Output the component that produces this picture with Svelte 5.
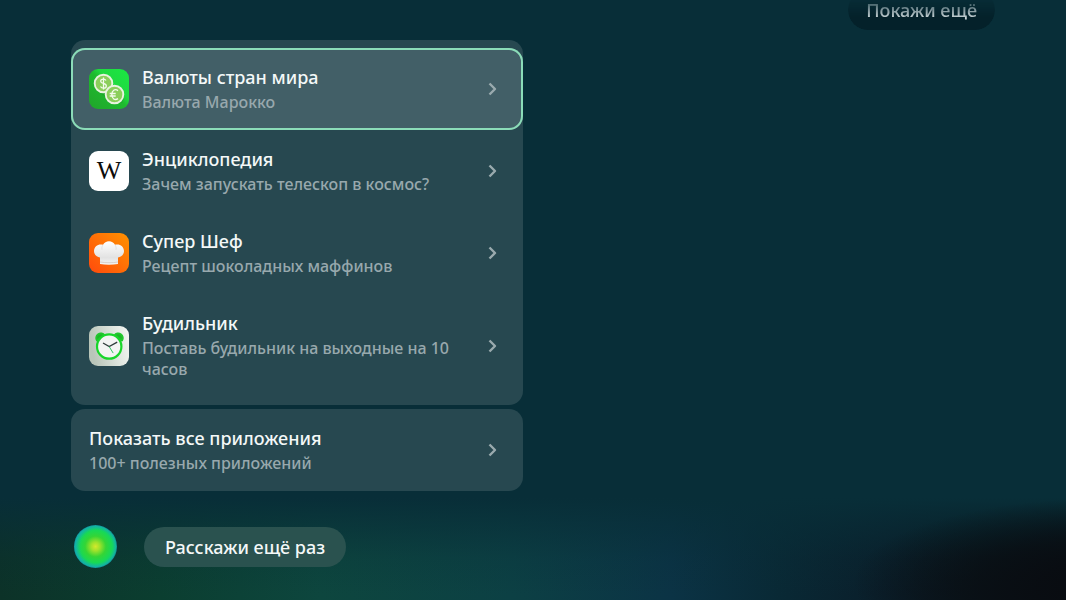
<script lang="ts">
  type App = {
    icon: string;
    title: string;
    phrase: string;
  };

  const apps: App[] = [
    { icon: 'currency', title: 'Валюты стран мира', phrase: 'Валюта Марокко' },
    { icon: 'wiki', title: 'Энциклопедия', phrase: 'Зачем запускать телескоп в космос?' },
    { icon: 'chef', title: 'Супер Шеф', phrase: 'Рецепт шоколадных маффинов' },
    { icon: 'alarm', title: 'Будильник', phrase: 'Поставь будильник на выходные на 10 часов' }
  ];

  let selected = $state(0);
</script>

{#snippet chevron()}
  <svg class="chevron" viewBox="0 0 12 16" aria-hidden="true">
    <path d="M2.500 2.500l5.500 5.500-5.500 5.500" fill="none" stroke="currentColor" stroke-width="2.400" stroke-linejoin="round" />
  </svg>
{/snippet}

<div class="screen">
  <main>
    <div class="history">
      <p class="message">Покажи ещё</p>
    </div>

    <div class="cards">
      <ul class="card list">
        {#each apps as app, i}
          <li>
            <button type="button" class="row" class:selected={selected === i} onclick={() => (selected = i)}>
              <svg class="icon" viewBox="0 0 40 40" aria-hidden="true">
                {#if app.icon === 'currency'}
                  <defs>
                    <linearGradient id="currency-bg" x1="0" y1="1" x2="1" y2="0">
                      <stop offset="0" stop-color="#20a52a" />
                      <stop offset="0.5" stop-color="#1fba2f" />
                      <stop offset="0.62" stop-color="#20da40" />
                      <stop offset="1" stop-color="#1ae743" />
                    </linearGradient>
                  </defs>
                  <rect width="40" height="40" rx="9" fill="url(#currency-bg)" />
                  <path d="M7 21l17 13h9l2-5-18-18z" fill="#138c20" opacity="0.25" />
                  <circle cx="14.5" cy="14.5" r="8.8" fill="#8bce5b" stroke="#e9f3df" stroke-width="1.9" />
                  <circle cx="25.5" cy="25.5" r="8.8" fill="#8bce5b" stroke="#e9f3df" stroke-width="1.9" />
                  <path d="M17 11.5c-.6-1-1.5-1.4-2.6-1.4-1.6 0-2.7.8-2.7 2.1 0 3 5.6 1.5 5.6 4.7 0 1.4-1.2 2.2-2.8 2.2-1.5 0-2.5-.6-3-1.6M14.5 8.5v12" fill="none" stroke="#f3faec" stroke-width="1.3" />
                  <path d="M29 21.6c-3.1-2.2-6.2-.1-6.2 4s3.1 6.2 6.2 4M20.7 24.5h6M20.7 27h6" fill="none" stroke="#f3faec" stroke-width="1.3" />
                {:else if app.icon === 'wiki'}
                  <rect width="40" height="40" rx="9" fill="#ffffff" />
                  <text x="20" y="28" text-anchor="middle" fill="#0b0b0b" font-family="Liberation Serif, serif" font-size="26">W</text>
                {:else if app.icon === 'chef'}
                  <defs>
                    <linearGradient id="chef-bg" x1="0" y1="1" x2="1" y2="0">
                      <stop offset="0" stop-color="#ff4a0c" />
                      <stop offset="1" stop-color="#ff9200" />
                    </linearGradient>
                    <linearGradient id="chef-hat" x1="0" y1="0" x2="0" y2="1">
                      <stop offset="0" stop-color="#ffffff" />
                      <stop offset="0.7" stop-color="#e2e2e2" />
                      <stop offset="1" stop-color="#f5f5f5" />
                    </linearGradient>
                  </defs>
                  <rect width="40" height="40" rx="9" fill="url(#chef-bg)" />
                  <path d="M11 24.5c-3.5-.5-6-3-6-6.500 0-4.800 4.500-7.600 9-6.300 1.300-2.300 3.400-3.500 6-3.500s4.700 1.200 6 3.500c4.500-1.300 9 1.500 9 6.300 0 3.500-2.500 6-6 6.500v6.500c-5.700 1-12.600 1-18 0z" fill="url(#chef-hat)" />
                  <path d="M14 11.700c-1 1.500-1.300 3-1 5M26 11.700c1 1.500 1.300 3 1 5" fill="none" stroke="#d9d9d9" stroke-width="0.7" />
                  <path d="M11 29c5.700 1 12.300 1 18 0" fill="none" stroke="#c9b8b0" stroke-width="0.6" />
                {:else}
                  <defs>
                    <linearGradient id="alarm-bg" x1="0" y1="0.2" x2="1" y2="0">
                      <stop offset="0" stop-color="#b9c5b9" />
                      <stop offset="0.6" stop-color="#dfe6df" />
                      <stop offset="1" stop-color="#f4f6f4" />
                    </linearGradient>
                  </defs>
                  <rect width="40" height="40" rx="9" fill="url(#alarm-bg)" />
                  <path d="M8 14.5a4.5 4.5 0 0 1 7.5-5zM33 14.5a4.5 4.5 0 0 0-7.500-5z" fill="#20b42b" stroke="#20c82d" stroke-width="2" stroke-linejoin="round" />
                  <circle cx="20.2" cy="20.5" r="12.2" fill="#f3f4f3" stroke="#18d62a" stroke-width="2.2" />
                  <path d="M14 17l6.2 3.6 8-4.5" fill="none" stroke="#2f3b3b" stroke-width="1.3" />
                  <path d="M20.2 20.6l4 6.5" stroke="#2fca60" stroke-width="1" />
                {/if}
              </svg>
              <span class="text">
                <span class="title">{app.title}</span>
                <span class="phrase">{app.phrase}</span>
              </span>
              {@render chevron()}
            </button>
          </li>
        {/each}
      </ul>

      <div class="card">
        <button type="button" class="row">
          <span class="text">
            <span class="title">Показать все приложения</span>
            <span class="phrase">100+ полезных приложений</span>
          </span>
          {@render chevron()}
        </button>
      </div>
    </div>
  </main>

  <footer>
    <button type="button" class="orb" aria-label="Ассистент"></button>
    <button type="button" class="suggest">Расскажи ещё раз</button>
  </footer>
</div>

<style>
  :global(body) {
    background: #082e38;
  }

  .screen {
    min-height: 100vh;
    box-sizing: border-box;
    padding: 0 71px 32px;
    display: flex;
    flex-direction: column;
    justify-content: space-between;
    color: #f4f8f8;
    font-family: 'Noto Sans', 'Open Sans', sans-serif;
    background:
      radial-gradient(ellipse 24% 14% at 104% 97%, #090b10, rgba(9, 14, 19, 0.8) 50%, transparent 100%),
      linear-gradient(#082e38 83%, rgba(8, 46, 56, 0.6) 88%, rgba(8, 46, 56, 0.2) 93%, transparent 99%),
      linear-gradient(90deg, #0c3228, #0b3e30 15%, #0d463e 30%, #0c4044 48%, #0b3345 63%, #092935 73%, #0a1e2a 83%, #09141b 92%, #090b10);
  }

  .history {
    height: 30px;
    overflow: hidden;
    display: flex;
    justify-content: flex-end;
    align-items: flex-end;
  }

  .message {
    margin: 0;
    padding: 0 18px;
    border-radius: 20px;
    background: #04212a;
    line-height: 40px;
    font-size: 18px;
    font-weight: 500;
    color: #c8d3d6;
    mask-image: linear-gradient(transparent 6px, #000 28px);
  }

  .cards {
    margin-top: 10px;
    max-width: 452px;
    display: grid;
    gap: 4px;
  }

  .card {
    border-radius: 14px;
    background: #274850;
  }

  .list {
    margin: 0;
    padding: 8px 0;
    list-style: none;
  }

  .row {
    width: 100%;
    padding: 17px 24px 17px 18px;
    border: none;
    border-radius: 14px;
    background: transparent;
    color: inherit;
    font: inherit;
    text-align: left;
    display: flex;
    align-items: center;
    gap: 13px;
    cursor: pointer;
  }

  .selected {
    background: #425f67;
    box-shadow: inset 0 0 0 2px #8bdcb8;
  }

  .icon {
    width: 40px;
    height: 40px;
    flex: none;
  }

  .text {
    flex: 1;
    display: grid;
    gap: 3px;
  }

  .title {
    font-size: 18px;
    font-weight: 500;
    line-height: 24px;
  }

  .phrase {
    font-size: 16px;
    font-weight: 500;
    line-height: 21px;
    color: #98a8ad;
  }

  .chevron {
    width: 12px;
    height: 16px;
    flex: none;
    color: #9aaaae;
  }

  footer {
    display: flex;
    align-items: center;
    gap: 27px;
    padding-left: 3px;
  }

  .orb {
    width: 43px;
    height: 43px;
    padding: 0;
    border: none;
    border-radius: 50%;
    background:
      radial-gradient(circle at 54% 50%, transparent 52%, rgba(20, 170, 180, 0.7) 74%),
      radial-gradient(circle, #d5e82d 0%, #a0e22b 14%, #35d535 34%, #17d956 54%, #12bd93 66%, #107f88 71%);
    cursor: pointer;
  }

  .suggest {
    padding: 0 21px;
    border: none;
    border-radius: 20px;
    background: #2a524f;
    color: #f4f8f8;
    font: inherit;
    font-size: 18px;
    font-weight: 500;
    line-height: 40px;
    cursor: pointer;
  }
</style>
